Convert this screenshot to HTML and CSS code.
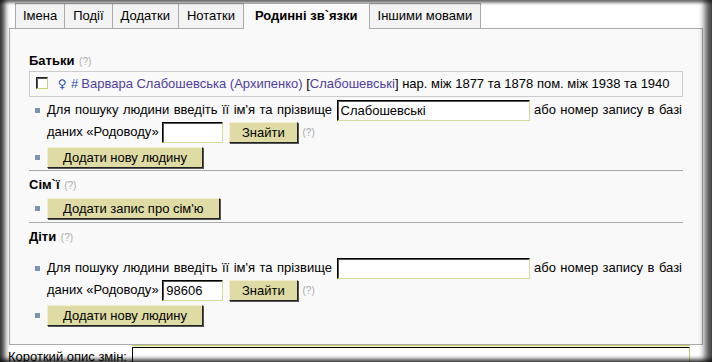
FILE: index.html
```html
<!DOCTYPE html>
<html lang="uk">
<head>
    <meta charset="UTF-8">
    <title>Родинні зв`язки</title>
    <link rel="stylesheet" href="styles.css">
</head>
<body>
    <div class="frame">
        <ul class="tabs">
            <li>Імена</li>
            <li>Події</li>
            <li>Додатки</li>
            <li>Нотатки</li>
            <li class="active">Родинні зв`язки</li>
            <li>Іншими мовами</li>
        </ul>
        <div class="panel">
            <h3>Батьки <span class="help">(?)</span></h3>
            <div class="person">
                <input type="checkbox" class="check">
                <span class="sex">♀</span>
                <a class="hash">#</a><a>Варвара Слабошевська (Архипенко)</a> [<a>Слабошевські</a>] нар. між 1877 та 1878 пом. між 1938 та 1940
            </div>
            <ul class="actions">
                <li class="search">Для пошуку людини введіть її ім'я та прізвище <input class="name" value="Слабошевські"> або номер запису в базі даних «Родоводу» <input class="num"> <button>Знайти</button> <span class="help">(?)</span></li>
                <li><button>Додати нову людину</button></li>
            </ul>
            <hr>
            <h3>Сім`ї <span class="help">(?)</span></h3>
            <ul class="actions">
                <li><button>Додати запис про сім'ю</button></li>
            </ul>
            <hr class="after-families">
            <h3>Діти <span class="help">(?)</span></h3>
            <ul class="actions children">
                <li class="search">Для пошуку людини введіть її ім'я та прізвище <input class="name"> або номер запису в базі даних «Родоводу» <input class="num" value="98606"> <button>Знайти</button> <span class="help">(?)</span></li>
                <li><button>Додати нову людину</button></li>
            </ul>
        </div>
        <div class="summary">
            <label>Короткий опис змін:</label>
            <input class="summary-input">
        </div>
    </div>
</body>
</html>
```

FILE: styles.css
```css
body {
    margin: 0;
    background-color: white;
    font-family: "Liberation Sans", Arial, sans-serif;
    font-size: 13px;
    color: black;
}
.frame {
    position: relative;
    width: 712px;
    height: 362px;
    overflow: hidden;
    box-sizing: border-box;
    padding: 3px 9px 0;
}
.frame::after {
    content: "";
    position: absolute;
    top: 0;
    left: 0;
    right: 0;
    bottom: 0;
    pointer-events: none;
    box-shadow: inset 7px 0 5px -2px rgba(0,0,0,0.75),
                inset -10px 0 6px -3px rgba(0,0,0,0.7),
                inset 0 4px 3px -1px rgba(0,0,0,0.45),
                inset 0 -5px 4px -2px rgba(0,0,0,0.7);
}
.tabs {
    list-style: none;
    display: flex;
    margin: 0 0 0 6px;
    padding: 0;
}
.tabs li {
    height: 24px;
    line-height: 24px;
    padding: 0 8px;
    background-color: #f3f3f3;
    border: 1px solid #aaa;
    border-bottom: none;
    border-left: none;
}
.tabs li:first-child {
    border-left: 1px solid #aaa;
    padding: 0 7px;
}
.tabs li.active {
    position: relative;
    z-index: 1;
    height: 25px;
    margin-bottom: -1px;
    padding: 0 11px;
    background-color: #f9f9f9;
    font-weight: bold;
}
.panel {
    background-color: #f9f9f9;
    border: 1px solid #aaa;
    padding: 18px 19px 18px;
}
h3 {
    margin: 5px 0 0;
    font-size: 13px;
    line-height: 18px;
}
.help {
    font-size: 10px;
    font-weight: normal;
    color: #aaa;
    margin-left: 1px;
}
.person {
    border: 1px solid #ccc;
    height: 24px;
    line-height: 24px;
    padding-left: 6px;
    white-space: nowrap;
}
.check {
    appearance: none;
    width: 12px;
    height: 12px;
    margin: 0 6px 0 0;
    vertical-align: -1px;
    background-color: white;
    border: 1px solid;
    border-color: #222 #c9d07a #c9d07a #222;
}
.sex {
    font-family: "DejaVu Sans", sans-serif;
    font-size: 12px;
    color: #2a49b8;
    margin-right: 1px;
}
a {
    color: #50409b;
}
a.hash {
    color: #2a49b8;
    margin-right: 3px;
}
.actions {
    list-style: none;
    margin: 2px 0 0;
    padding: 0 0 0 18px;
}
.actions.children {
    margin-top: 10px;
}
.actions li {
    position: relative;
    margin-top: 2px;
    line-height: 22px;
}
.actions li::before {
    content: "";
    position: absolute;
    left: -12px;
    top: 9px;
    width: 5px;
    height: 5px;
    background-color: #7a94ad;
}
.search {
    text-align: justify;
    padding-right: 1px;
}
input {
    font-family: inherit;
    font-size: 13px;
    height: 21px;
    box-sizing: border-box;
    padding: 0 3px;
    vertical-align: middle;
    background-color: white;
    border: 1px solid;
    border-color: #000 #d4d99c #d4d99c #000;
    box-shadow: inset 1px 1px 0 #555;
}
.name {
    width: 193px;
}
.num {
    width: 61px;
}
button {
    font-family: inherit;
    font-size: 13px;
    height: 21px;
    padding: 0 15px;
    vertical-align: middle;
    background-color: #dedba4;
    border: 1px solid;
    border-color: #f1efd0 #222 #222 #f1efd0;
    box-shadow: 1px 1px 0 #555;
}
.search button {
    width: 69px;
    padding: 0 10px;
    margin-left: 2px;
}
hr {
    border: none;
    border-top: 1px solid #aaa;
    margin: 2px 0 0;
}
hr.after-families {
    margin-top: 3px;
}
.summary {
    display: flex;
    align-items: flex-start;
    margin: 1px 0 0 -1px;
}
.summary label {
    width: 124px;
    line-height: 20px;
    margin-top: 1px;
}
.summary-input {
    width: 558px;
    height: 24px;
    margin-top: 1px;
    border-color: #000 #c5cd6c #c5cd6c #000;
    box-shadow: 0 -1px 0 #f4f6d8, 0 -2px 0 #c5cd6c;
}
```
